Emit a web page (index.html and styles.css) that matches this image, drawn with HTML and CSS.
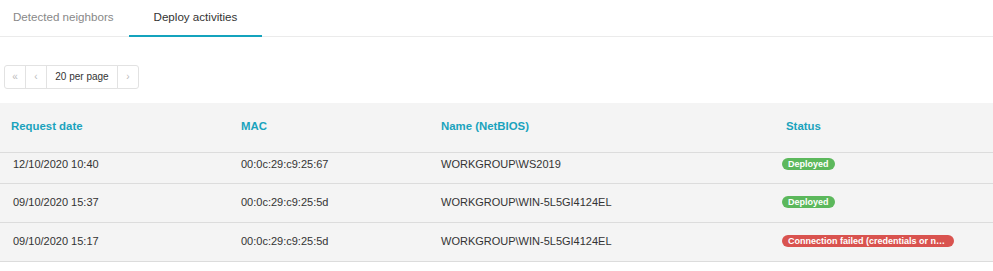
FILE: index.html
```html
<!DOCTYPE html>
<html>
<head>
<meta charset="utf-8">
<link rel="stylesheet" href="styles.css">
</head>
<body>
<div class="tabs">
  <div class="tab">Detected neighbors</div>
  <div class="tab active">Deploy activities</div>
</div>
<div class="pager">
  <span class="pbtn muted">«</span><span class="pbtn muted">‹</span><span class="pbtn size">20 per page</span><span class="pbtn muted">›</span>
</div>
<table class="grid">
  <thead>
    <tr><th class="c1">Request date</th><th class="c2">MAC</th><th class="c3">Name (NetBIOS)</th><th class="c4">Status</th></tr>
  </thead>
  <tbody>
    <tr class="first"><td class="c1">12/10/2020 10:40</td><td class="c2">00:0c:29:c9:25:67</td><td class="c3">WORKGROUP\WS2019</td><td class="c4"><span class="badge ok">Deployed</span></td></tr>
    <tr><td class="c1">09/10/2020 15:37</td><td class="c2">00:0c:29:c9:25:5d</td><td class="c3">WORKGROUP\WIN-5L5GI4124EL</td><td class="c4"><span class="badge ok">Deployed</span></td></tr>
    <tr><td class="c1">09/10/2020 15:17</td><td class="c2">00:0c:29:c9:25:5d</td><td class="c3">WORKGROUP\WIN-5L5GI4124EL</td><td class="c4"><span class="badge err" title="Connection failed (credentials or network)">Connection failed (credentials or n…</span></td></tr>
  </tbody>
</table>
</body>
</html>
```
FILE: styles.css
```css
html, body { margin: 0; padding: 0; background: #fff; }
body { font-family: "Liberation Sans", Arial, sans-serif; color: #333; width: 993px; }

.tabs { display: flex; border-bottom: 1px solid #ebebeb; height: 36px; }
.tab { font-size: 11.6px; color: #888; padding: 0 15px 0 13px; line-height: 34px; height: 35px; white-space: nowrap; }
.tab.active { color: #333; padding: 0 25px; text-align: center; border-bottom: 2px solid #14a3bd; }

.pager { display: flex; padding: 28px 0 0 4px; height: 24px; }
.pbtn { display: inline-block; height: 22px; line-height: 22px; border: 1px solid #e2e2e2; font-size: 10px; color: #333; text-align: center; margin-right: -1px; background: #fff; }
.pbtn:first-child { border-radius: 3px 0 0 3px; }
.pbtn:last-child { border-radius: 0 3px 3px 0; }
.pbtn.muted { width: 20px; color: #bbb; font-size: 10px; }
.pbtn.size { width: 70px; }

.grid { margin-top: 14px; width: 993px; border-collapse: collapse; background: #f4f4f4; table-layout: fixed; }
.grid th { height: 45px; padding: 0 0 4px 0; text-align: left; font-size: 11.4px; font-weight: bold; color: #1aa3bd; border-bottom: 1px solid #dcdcdc; vertical-align: middle; }
.grid td { height: 35px; padding: 0 0 3px 0; font-size: 11px; color: #333; border-bottom: 1px solid #dcdcdc; white-space: nowrap; }
.grid tr.first td { height: 21px; padding-bottom: 9px; }
.grid td.c1 { padding-left: 13px; width: 215px; }
.grid th.c1 { padding-left: 11px; width: 217px; }
.grid .c2 { padding-left: 13px; width: 200px; }
.c3 { width: 341px; }
.grid th.c4 { padding-left: 4px; }

.badge { display: inline-block; height: 12px; line-height: 12px; padding: 0 6px; border-radius: 7px; color: #fff; font-size: 9px; font-weight: bold; vertical-align: middle; }
.badge.ok { background: #5cb85c; }
.badge.err { background: #d9534f; width: 160px; white-space: nowrap; }
```
